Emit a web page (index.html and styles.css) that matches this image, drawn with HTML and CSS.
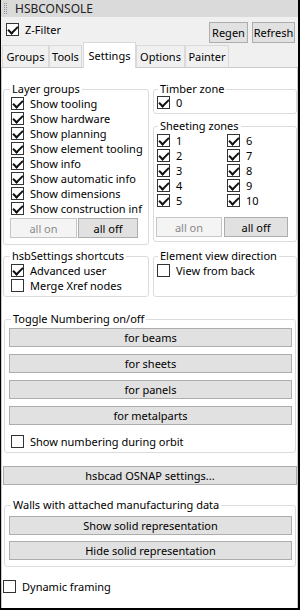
FILE: index.html
```html
<!DOCTYPE html>
<html lang="en">
<head>
    <meta charset="UTF-8">
    <title>HSBCONSOLE</title>
    <link rel="stylesheet" href="styles.css">
</head>
<body>
<div class="window">
    <div class="titlebar"><span class="grip"></span><span class="title">HSBCONSOLE</span></div>

    <div class="toolbar">
        <label class="check"><span class="box on"></span>Z-Filter</label>
        <div class="tool-buttons">
            <button class="btn regen">Regen</button>
            <button class="btn refresh">Refresh</button>
        </div>
    </div>

    <div class="tabs">
        <div class="tab groups">Groups</div>
        <div class="tab tools">Tools</div>
        <div class="tab settings active">Settings</div>
        <div class="tab options">Options</div>
        <div class="tab painter">Painter</div>
    </div>

    <div class="page">
        <div class="columns">
            <fieldset class="group">
                <legend>Layer groups</legend>
                <div class="body layers">
                    <label class="check"><span class="box on"></span>Show tooling</label>
                    <label class="check"><span class="box on"></span>Show hardware</label>
                    <label class="check"><span class="box on"></span>Show planning</label>
                    <label class="check"><span class="box on"></span>Show element tooling</label>
                    <label class="check"><span class="box on"></span>Show info</label>
                    <label class="check"><span class="box on"></span>Show automatic info</label>
                    <label class="check"><span class="box on"></span>Show dimensions</label>
                    <label class="check"><span class="box on"></span>Show construction inf</label>
                    <div class="pair left-pair">
                        <button class="btn all-on" disabled>all on</button>
                        <button class="btn all-off">all off</button>
                    </div>
                </div>
            </fieldset>

            <div class="stack">
                <fieldset class="group right">
                    <legend>Timber zone</legend>
                    <div class="body timber">
                        <label class="check"><span class="box on"></span>0</label>
                    </div>
                </fieldset>
                <fieldset class="group right sheeting">
                    <legend>Sheeting zones</legend>
                    <div class="body zones-body">
                        <div class="zones">
                            <label class="check"><span class="box on"></span>1</label>
                            <label class="check"><span class="box on"></span>2</label>
                            <label class="check"><span class="box on"></span>3</label>
                            <label class="check"><span class="box on"></span>4</label>
                            <label class="check"><span class="box on"></span>5</label>
                            <label class="check"><span class="box on"></span>6</label>
                            <label class="check"><span class="box on"></span>7</label>
                            <label class="check"><span class="box on"></span>8</label>
                            <label class="check"><span class="box on"></span>9</label>
                            <label class="check"><span class="box on"></span>10</label>
                        </div>
                        <div class="pair right-pair">
                            <button class="btn all-on" disabled>all on</button>
                            <button class="btn all-off">all off</button>
                        </div>
                    </div>
                </fieldset>
            </div>
        </div>

        <div class="columns second">
            <fieldset class="group">
                <legend>hsbSettings shortcuts</legend>
                <div class="body shortcuts">
                    <label class="check"><span class="box on"></span>Advanced user</label>
                    <label class="check"><span class="box"></span>Merge Xref nodes</label>
                </div>
            </fieldset>
            <fieldset class="group right">
                <legend>Element view direction</legend>
                <div class="body view">
                    <label class="check"><span class="box"></span>View from back</label>
                </div>
            </fieldset>
        </div>

        <fieldset class="group wide numbering">
            <legend>Toggle Numbering on/off</legend>
            <div class="body">
                <button class="btn row-btn">for beams</button>
                <button class="btn row-btn">for sheets</button>
                <button class="btn row-btn">for panels</button>
                <button class="btn row-btn">for metalparts</button>
                <label class="check orbit"><span class="box"></span>Show numbering during orbit</label>
            </div>
        </fieldset>

        <button class="btn osnap">hsbcad OSNAP settings...</button>

        <fieldset class="group wide walls">
            <legend>Walls with attached manufacturing data</legend>
            <div class="body">
                <button class="btn row-btn">Show solid representation</button>
                <button class="btn row-btn">Hide solid representation</button>
            </div>
        </fieldset>

        <label class="check framing"><span class="box"></span>Dynamic framing</label>
    </div>
</div>
</body>
</html>
```

FILE: styles.css
```css
* {
    box-sizing: border-box;
}
body {
    margin: 0;
    font-family: "Noto Sans", "Open Sans", sans-serif;
    font-size: 11px;
    color: #000;
    background: #fff;
}
.window {
    width: 300px;
    height: 610px;
    border-left: 1px solid #000;
    border-right: 2px solid #000;
    border-bottom: 2px solid #000;
    background: #f0f0f0;
    display: flex;
    flex-direction: column;
}

/* title + toolbar */
.titlebar {
    height: 17px;
    background: #dadada;
    display: flex;
    align-items: center;
    padding-left: 3px;
}
.grip {
    width: 3px;
    height: 11px;
    border-left: 1px dotted #8c8c8c;
    border-right: 1px dotted #8c8c8c;
    margin-right: 8px;
}
.title {
    font-size: 12px;
    color: #222;
    line-height: 17px;
}
.toolbar {
    height: 25px;
    display: flex;
    justify-content: space-between;
    align-items: flex-start;
    padding: 5px 3px 0 5px;
}
.tool-buttons {
    display: flex;
    gap: 4px;
}
.regen {
    width: 39px;
    height: 21px;
}
.refresh {
    width: 43px;
    height: 21px;
}

/* tabs */
.tabs {
    height: 25px;
    display: flex;
    align-items: flex-end;
    padding-left: 1px;
    position: relative;
    z-index: 1;
}
.tab {
    height: 22px;
    border: 1px solid #d9d9d9;
    border-bottom: none;
    background: #f0f0f0;
    text-align: center;
    line-height: 20px;
    padding-top: 1px;
    white-space: nowrap;
}
.tab.active {
    height: 26px;
    margin-bottom: -1px;
    margin-left: 1px;
    background: #fff;
    padding-top: 3px;
}
.groups { width: 47px; }
.tools { width: 33px; }
.settings { width: 53px; }
.options { width: 49px; }
.painter { width: 44px; }

/* page */
.page {
    flex: 1;
    background: #fff;
    border: 1px solid #cacaca;
    border-bottom: none;
    padding: 14px 0 0 1px;
}
.columns {
    display: grid;
    grid-template-columns: 146px 144px;
    column-gap: 4px;
    align-items: start;
}
.columns.second {
    margin-top: 4px;
    align-items: stretch;
}

/* group boxes */
.group {
    margin: 0;
    padding: 0;
    min-width: 0;
    border: 1px solid #dcdcdc;
    border-radius: 3px;
}
.group legend {
    margin-left: 6px;
    padding: 0 2px;
    line-height: 14px;
    white-space: nowrap;
}
.group.right legend {
    margin-left: 4px;
}
.body {
    padding: 0 3px 3px 7px;
}
.layers {
    padding-bottom: 6px;
}
.timber {
    padding: 0 3px 3px 3px;
}
.timber .check {
    margin-top: -1px;
}
.sheeting {
    margin-top: 5px;
}
.zones-body {
    padding: 0 3px 4px 3px;
}
.zones {
    display: grid;
    grid-template-rows: repeat(5, 15px);
    grid-template-columns: 70px auto;
    grid-auto-flow: column;
}
.view {
    padding-left: 3px;
}
.wide {
    margin: 0 1px;
}
.numbering {
    margin-top: 15px;
}
.wide .body {
    padding: 0 3px 3px 4px;
}
.walls {
    margin-top: 13px;
}
.walls .body {
    padding-bottom: 6px;
}

/* checkboxes */
.check {
    display: flex;
    align-items: center;
    height: 15px;
    line-height: 15px;
    white-space: nowrap;
    overflow: hidden;
}
.box {
    flex: none;
    width: 13px;
    height: 13px;
    border: 1px solid #333;
    background: #fff;
    margin-right: 6px;
    position: relative;
}
.box.on::after {
    content: "";
    position: absolute;
    left: 3px;
    top: 0;
    width: 4px;
    height: 8px;
    border-right: 2px solid #111;
    border-bottom: 2px solid #111;
    transform: rotate(45deg);
}
.orbit {
    margin-top: 9px;
    margin-left: 2px;
}
.framing {
    margin-top: 12px;
}

/* buttons */
.btn {
    font-family: inherit;
    font-size: 11px;
    color: #000;
    background: #e1e1e1;
    border: 1px solid #adadad;
    border-radius: 0;
    padding: 0;
    margin: 0;
    line-height: 17px;
    text-align: center;
    white-space: nowrap;
}
.btn:disabled {
    background: #f4f4f4;
    border-color: #c6c6c6;
    color: #8a8a8a;
}
.pair {
    display: flex;
    height: 20px;
}
.pair .btn {
    height: 20px;
}
.left-pair {
    margin: 2px 0 0 -1px;
    gap: 1px;
}
.left-pair .all-on { width: 67px; }
.left-pair .all-off { width: 60px; }
.right-pair {
    margin: 9px 0 0 -1px;
    gap: 2px;
}
.right-pair .all-on { width: 66px; }
.right-pair .all-off { width: 64px; }
.row-btn {
    display: block;
    width: 100%;
    height: 19px;
    margin-top: 7px;
}
.numbering .row-btn:first-child {
    margin-top: 2px;
}
.walls .row-btn:first-child {
    margin-top: 4px;
}
.walls .row-btn + .row-btn {
    margin-top: 6px;
}
.osnap {
    display: block;
    width: 294px;
    height: 19px;
    margin-top: 13px;
}
```
